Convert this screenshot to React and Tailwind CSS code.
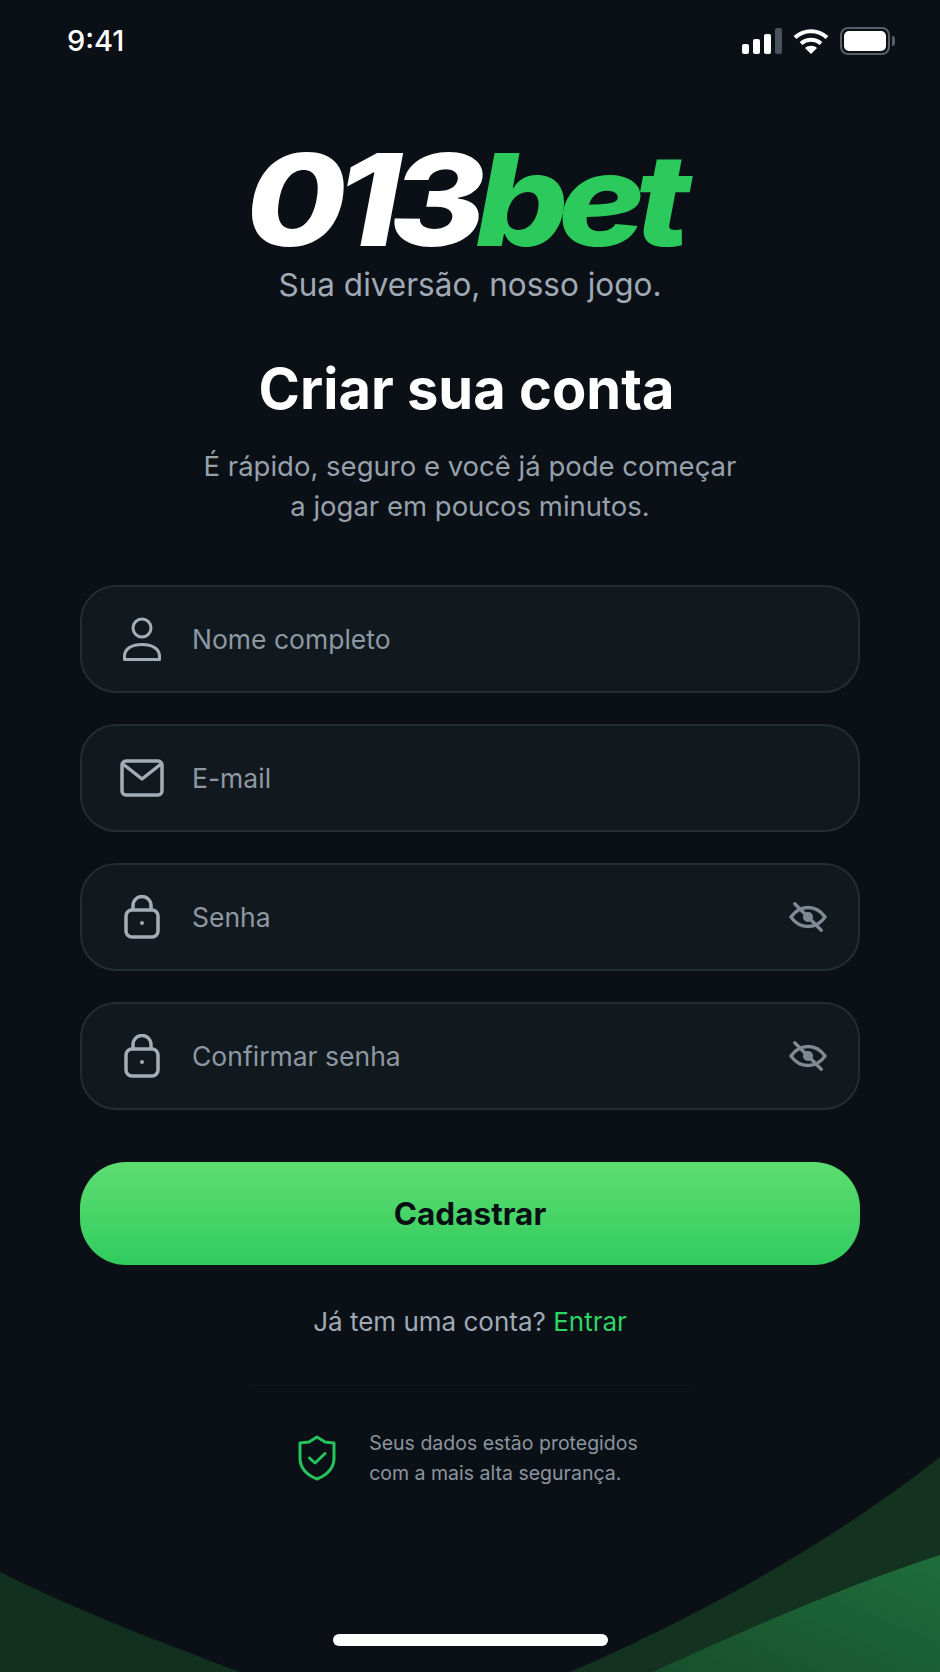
const fontStack = "font-['Inter','Noto_Sans',sans-serif]";

const UserIcon = () => (
  <svg width="40" height="44" viewBox="0 0 40 44" fill="none" stroke="#a3adb8" strokeWidth="3">
    <circle cx="20" cy="11" r="9" />
    <path d="M2.5 42.5v-3.5c0-7 7-11.5 17.5-11.5s17.5 4.500 17.500 11.500v3.500z" strokeLinejoin="round" />
  </svg>
);

const MailIcon = () => (
  <svg width="44" height="38" viewBox="0 0 44 38" fill="none" stroke="#a3adb8" strokeWidth="3.500" strokeLinejoin="round">
    <rect x="2" y="2" width="40" height="34" rx="4" />
    <path d="M3 5l19 15L41 5" />
  </svg>
);

const LockIcon = () => (
  <svg width="36" height="44" viewBox="0 0 36 44" fill="none" stroke="#a3adb8" strokeWidth="3.500">
    <rect x="2" y="15" width="32" height="27" rx="6" />
    <path d="M9 15V10.500a9 9 0 0 1 18 0V15" />
    <circle cx="18" cy="28" r="2" fill="#a3adb8" stroke="none" />
  </svg>
);

const EyeOffIcon = () => (
  <svg width="38" height="32" viewBox="0 0 40 32" fill="none" stroke="#7f8a95" strokeWidth="3.500">
    <path d="M2 16C7 9 13 6 20 6s13 3 18 10c-5 7-11 10-18 10S7 23 2 16z" strokeLinejoin="round" />
    <circle cx="20" cy="16" r="3.500" />
    <path d="M6 2l28 28" strokeLinecap="round" />
  </svg>
);

const ShieldIcon = () => (
  <svg width="38" height="46" viewBox="0 0 38 46" fill="none" stroke="#25c45c" strokeWidth="3" strokeLinejoin="round" strokeLinecap="round">
    <path d="M19 2l8 5 9 1v15c0 10-7 17-17 21C9 40 2 33 2 23V8l9-1z" />
    <path d="M11.500 23l5.500 5 10-9.500" />
  </svg>
);

const StatusIcons = () => (
  <div className="flex items-center gap-[11px]">
    <svg width="40" height="26" viewBox="0 0 40 26">
      <rect x="0" y="16" width="7" height="10" rx="2" fill="#fff" />
      <rect x="11" y="11" width="7" height="15" rx="2" fill="#fff" />
      <rect x="22" y="6" width="7" height="20" rx="2" fill="#fff" />
      <rect x="33" y="0" width="7" height="26" rx="2" fill="#4a525b" />
    </svg>
    <svg width="36" height="26" viewBox="0 0 36 26" fill="none" stroke="#fff" strokeWidth="4">
      <path d="M2 9.500C11 1 25 1 34 9.500" />
      <path d="M8 15.500c6-5 14-5 20 0" />
      <path d="M18 26l-6-6c3-3 9-3 12 0z" fill="#fff" stroke="none" />
    </svg>
    <div className="flex items-center gap-[2px]">
      <div className="flex h-[28px] w-[50px] items-center justify-center rounded-[8px] border-2 border-[#565e67]">
        <div className="h-[20px] w-[42px] rounded-[5px] bg-white" />
      </div>
      <div className="h-[10px] w-[3px] rounded-r-sm bg-[#565e67]" />
    </div>
  </div>
);

const fields = [
  { label: "Nome completo", icon: <UserIcon /> },
  { label: "E-mail", icon: <MailIcon /> },
  { label: "Senha", icon: <LockIcon />, eye: true },
  { label: "Confirmar senha", icon: <LockIcon />, eye: true },
];

export default function App() {
  return (
    <div className={`relative h-[1672px] w-[940px] overflow-hidden bg-[#0a1015] ${fontStack}`}>
      <svg className="absolute bottom-0 left-0" width="940" height="225" viewBox="0 0 940 225">
        <defs>
          <linearGradient id="waveBright" x1="0" y1="1" x2="1" y2="0">
            <stop offset="0" stopColor="#174f2c" />
            <stop offset="1" stopColor="#1f6d3b" />
          </linearGradient>
        </defs>
        <path d="M0 125C80 165 160 195 240 225H0z" fill="#11301f" />
        <path d="M570 225C650 190 800 120 940 10V225z" fill="#13321f" />
        <path d="M653 225C730 190 840 140 940 108V225z" fill="url(#waveBright)" />
      </svg>

      <div className="relative flex flex-col items-center">
        <div className="flex w-full items-center justify-between pl-[67px] pr-[45px] pt-[25px]">
          <span className="text-[29px] font-medium leading-[32px] text-white">9:41</span>
          <StatusIcons />
        </div>

        <div className="mr-[15px] mt-[95px] h-[96px] scale-x-[1.14] text-[128px] font-extrabold italic leading-[96px] tracking-[-9px]">
          <span className="text-white">013</span>
          <span className="text-[#2cc95c]">bet</span>
        </div>
        <p className="mt-[17px] text-[31.5px] leading-[40px] text-[#a0aab5]">Sua diversão, nosso jogo.</p>

        <h1 className="mr-[7px] mt-[52px] text-[56px] font-bold leading-[64px] text-white">Criar sua conta</h1>
        <p className="mt-[25px] text-center text-[27.5px] leading-[40px] text-[#97a1ac]">
          É rápido, seguro e você já pode começar
          <br />
          a jogar em poucos minutos.
        </p>

        <div className="mt-[59px] flex w-[780px] flex-col gap-[31px]">
          {fields.map((f) => (
            <div
              key={f.label}
              className="flex h-[108px] items-center gap-[27px] rounded-[36px] border-2 border-[#242c35] bg-[#11181e] pl-[37px] pr-[31px]"
            >
              <div className="flex w-[46px] justify-center">{f.icon}</div>
              <span className="flex-1 pt-[2px] text-[26.5px] text-[#8e98a3]">{f.label}</span>
              {f.eye && <EyeOffIcon />}
            </div>
          ))}
        </div>

        <button className="mt-[52px] h-[103px] w-[780px] rounded-[46px] bg-gradient-to-b from-[#5cdd70] to-[#2fcc5f] text-[31.5px] font-bold text-[#0a0f14]">
          Cadastrar
        </button>

        <p className="mt-[37px] text-[26px] leading-[40px] text-[#a0aab5]">
          Já tem uma conta? <span className="text-[#2fd465]">Entrar</span>
        </p>

        <div className="mt-[43px] h-px w-[440px] bg-[#10161c]" />

        <div className="mr-[4px] mt-[42px] flex items-center gap-[33px]">
          <ShieldIcon />
          <p className="text-[19.5px] leading-[30px] text-[#8b95a0]">
            Seus dados estão protegidos
            <br />
            com a mais alta segurança.
          </p>
        </div>
      </div>

      <div className="absolute bottom-[26px] left-[333px] h-[12px] w-[275px] rounded-full bg-white" />
    </div>
  );
}
